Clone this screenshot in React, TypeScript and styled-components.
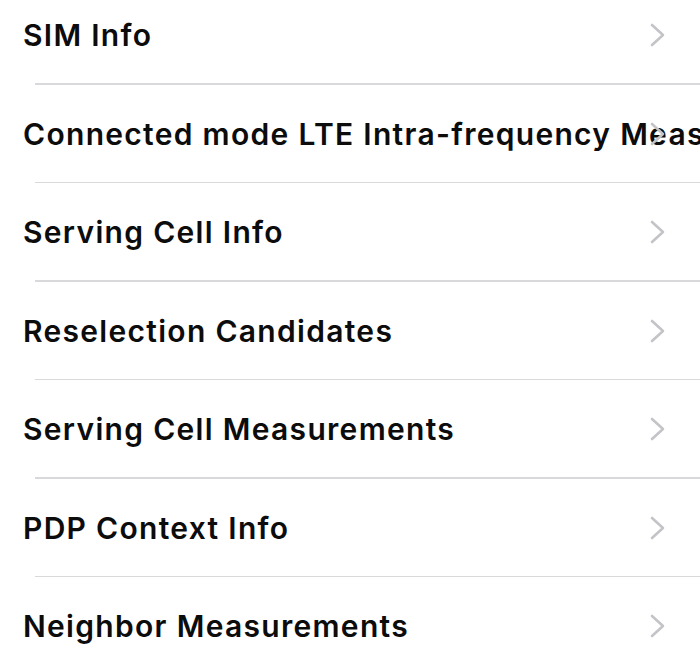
import React from "react";
import styled, { createGlobalStyle } from "styled-components";

const Global = createGlobalStyle`
  html, body { margin: 0; padding: 0; background: #ffffff; }
  body { width: 700px; height: 670px; overflow: hidden; }
`;

const Screen = styled.div`
  width: 700px;
  height: 670px;
  overflow: hidden;
  background: #ffffff;
`;

const List = styled.ul`
  list-style: none;
  margin: -14px 0 0 0;
  padding: 0;
`;

const Row = styled.li`
  display: grid;
  grid-template-columns: 1fr;
  align-items: center;
  height: 98.5px;
  padding-left: 23px;
  box-sizing: border-box;
  position: relative;
  &:not(:last-child)::after {
    content: "";
    position: absolute;
    left: 35px;
    right: 0;
    bottom: 0;
    height: 1.5px;
    background: #d9d9dc;
  }
`;

const Label = styled.span`
  grid-area: 1 / 1;
  font-family: Inter, "Noto Sans", sans-serif;
  font-weight: 580;
  font-size: 30px;
  color: #0c0c0c;
  white-space: nowrap;
  letter-spacing: 1.3px;
  min-width: 0;
`;

const Chevron = styled.svg`
  grid-area: 1 / 1;
  justify-self: end;
  margin-right: 35px;
  width: 15px;
  height: 24px;
  color: #c4c4c8;
`;

const items = [
  "SIM Info",
  "Connected mode LTE Intra-frequency Meas",
  "Serving Cell Info",
  "Reselection Candidates",
  "Serving Cell Measurements",
  "PDP Context Info",
  "Neighbor Measurements",
];

export default function App() {
  return (
    <Screen>
      <Global />
      <List>
        {items.map((t) => (
          <Row key={t}>
            <Label>{t}</Label>
            <Chevron viewBox="0 0 15 24" fill="none">
              <path d="M2 2 L13 12 L2 22" stroke="currentColor" strokeWidth="2.6" strokeLinecap="round" strokeLinejoin="round" />
            </Chevron>
          </Row>
        ))}
      </List>
    </Screen>
  );
}
